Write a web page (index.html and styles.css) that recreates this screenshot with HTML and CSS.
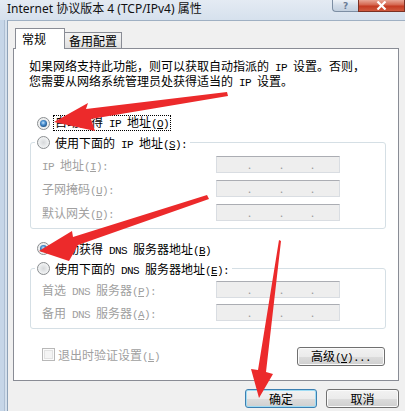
FILE: index.html
```html
<!DOCTYPE html>
<html lang="zh-CN">
<head>
<meta charset="utf-8">
<title>Internet 协议版本 4 (TCP/IPv4) 属性</title>
<link rel="stylesheet" href="styles.css">
</head>
<body>
<div class="window">
  <div class="titlebar">
    <span class="title">Internet 协议版本 4 (TCP/IPv4) 属性</span>
    <div class="caption-btns">
      <span class="cap-btn help">?</span>
      <span class="cap-btn close"><svg width="11" height="9" viewBox="0 0 11 9"><path d="M1.5 0.5 L9.5 8.5 M9.5 0.5 L1.5 8.5" stroke="#fff" stroke-width="2.2" fill="none"/></svg></span>
    </div>
  </div>
  <div class="client">
    <div class="tabs">
      <span class="tab active">常规</span>
      <span class="tab">备用配置</span>
    </div>
    <div class="panel">
      <div class="intro">
        <div class="line">如果网络支持此功能，则可以获取自动指派的<span class="lat"> IP </span>设置。否则，</div>
        <div class="line">您需要从网络系统管理员处获得适当的<span class="lat"> IP </span>设置。</div>
      </div>

      <div class="radio-row top"><span class="radio checked"></span><span class="focus">自动获得<span class="lat"> IP </span>地址<span class="lat">(<u>O</u>)</span></span></div>
      <fieldset class="group ip">
        <legend><span class="radio"></span><span>使用下面的<span class="lat"> IP </span>地址<span class="lat">(<u>S</u>):</span></span></legend>
        <div class="field"><span class="flabel"><span class="lat">IP </span>地址<span class="lat">(<u>I</u>):</span></span><span class="ipbox"><i>.</i><i>.</i><i>.</i><i></i></span></div>
        <div class="field"><span class="flabel">子网掩码<span class="lat">(<u>U</u>):</span></span><span class="ipbox"><i>.</i><i>.</i><i>.</i><i></i></span></div>
        <div class="field"><span class="flabel">默认网关<span class="lat">(<u>D</u>):</span></span><span class="ipbox"><i>.</i><i>.</i><i>.</i><i></i></span></div>
      </fieldset>

      <div class="radio-row dns"><span class="radio checked"></span><span class="plain">自动获得<span class="lat"> DNS </span>服务器地址<span class="lat">(<u>B</u>)</span></span></div>
      <fieldset class="group dnsgrp">
        <legend><span class="radio"></span><span>使用下面的<span class="lat"> DNS </span>服务器地址<span class="lat">(<u>E</u>):</span></span></legend>
        <div class="field"><span class="flabel">首选<span class="lat"> DNS </span>服务器<span class="lat">(<u>P</u>):</span></span><span class="ipbox"><i>.</i><i>.</i><i>.</i><i></i></span></div>
        <div class="field"><span class="flabel">备用<span class="lat"> DNS </span>服务器<span class="lat">(<u>A</u>):</span></span><span class="ipbox"><i>.</i><i>.</i><i>.</i><i></i></span></div>
      </fieldset>

      <div class="bottom-row">
        <div class="checkline"><span class="check"></span><span class="dis">退出时验证设置<span class="lat">(<u>L</u>)</span></span></div>
        <button class="btn adv">高级<span class="lat">(<u>V</u>)...</span></button>
      </div>
    </div>
    <div class="dialog-btns">
      <button class="btn ok">确定</button>
      <button class="btn cancel">取消</button>
    </div>
  </div>

  <svg class="arrows" width="405" height="411" viewBox="0 0 405 411">
    <polygon fill="#ec2a2b" points="54,122 88,103 86,109 227,92 228,96 91,119 95,131"/>
    <polygon fill="#ec2a2b" points="39,251 72,231 73,237 207,195 209,199 78,245 69,261"/>
    <polygon fill="#ec2a2b" points="259,398 251,369 258,370 279,240 281,241 266,372 273,374"/>
  </svg>
</div>
</body>
</html>
```

FILE: styles.css
```css
* { box-sizing: border-box; margin: 0; padding: 0; }

html, body {
  width: 405px;
  height: 411px;
  overflow: hidden;
}

body {
  font-family: "Noto Sans CJK SC", sans-serif;
  font-size: 12px;
  color: #000;
  background: #cddbea;
}

.window {
  position: relative;
  width: 405px;
  height: 411px;
  background: linear-gradient(to right, #c6d6e8 0, #c6d6e8 4px, #aebfd3 4px, #aebfd3 5px, #d4e0ed 5px);
}

/* Latin runs drawn in a fixed 6px-per-glyph face, like the dialog's 宋体 */
.lat {
  font-family: "Liberation Mono", monospace;
  font-size: 11px;
  letter-spacing: -0.6px;
  white-space: pre;
}

/* ---------- title bar ---------- */
.titlebar {
  height: 20px;
  display: flex;
  align-items: flex-start;
  padding-left: 7px;
  background: linear-gradient(to bottom, #e4ebf3, #d6e1ed);
}

.title {
  font-family: "Noto Sans", "Noto Sans CJK SC", sans-serif;
  font-size: 12px;
  line-height: 17px;
  color: #111;
}

.caption-btns {
  margin-left: auto;
  display: flex;
}

.cap-btn {
  height: 12px;
  display: flex;
  align-items: center;
  justify-content: center;
}

.cap-btn.help {
  width: 26px;
  border: 1px solid #7d8ea3;
  border-top: none;
  border-right: none;
  border-bottom-left-radius: 4px;
  background: linear-gradient(to bottom, #eef2f7, #d2dce8 50%, #c3d0df);
  color: #6a7d96;
  font-family: "DejaVu Sans", sans-serif;
  font-size: 9px;
  font-weight: bold;
  line-height: 10px;
}

.cap-btn.close {
  width: 47px;
  border: 1px solid #7b3124;
  border-top: none;
  background: linear-gradient(to bottom, #e8a696, #d4654e 45%, #c43a22 55%, #d05a3e);
}

/* ---------- client area ---------- */
.client {
  margin-left: 7px;
  height: 391px;
  background: #f0f0f0;
  border-left: 1px solid #8ea2b8;
  border-top: 1px solid #9fb0c3;
  padding-top: 7px;
}

.tabs {
  display: flex;
  align-items: flex-end;
  height: 21px;
  margin-left: 7px;
  margin-bottom: -1px;
  position: relative;
  z-index: 1;
}

.tab {
  display: block;
  border: 1px solid #898c95;
  border-bottom: none;
  line-height: 14px;
}

.tab.active {
  width: 50px;
  height: 21px;
  background: #fff;
  padding: 3px 0 0 6px;
}

.tab:not(.active) {
  width: 57px;
  height: 16px;
  margin-bottom: 1px;
  border-left: none;
  padding: 1px 0 0 4px;
  background: linear-gradient(to bottom, #f3f3f3, #ebebeb 50%, #dedede);
}

.panel {
  margin-left: 5px;
  width: 386px;
  height: 333px;
  border: 1px solid #898c95;
  background: #fff;
  padding: 9px 0 0 15px;
}

.intro .line {
  height: 15px;
  line-height: 15px;
  white-space: nowrap;
}

u { text-decoration: underline; text-underline-offset: 1px; }

/* ---------- radios ---------- */
.radio-row {
  display: flex;
  align-items: center;
  height: 18px;
  padding-left: 8px;
}

.radio-row.top { margin-top: 26px; }
.radio-row.dns { margin-top: 10px; gap: 5px; }

.radio {
  flex: none;
  position: relative;
  width: 13px;
  height: 13px;
  border-radius: 50%;
  border: 1px solid #8a8d90;
  background: radial-gradient(circle at 50% 50%, #d6d8da 0, #eceeef 55%, #fbfbfb 100%);
}

.radio.checked::after {
  content: "";
  position: absolute;
  left: 2px;
  top: 2px;
  width: 7px;
  height: 7px;
  border-radius: 50%;
  background: radial-gradient(circle at 45% 40%, #c7e4fb 0, #4e93d3 35%, #16497f 80%, #0e345f 100%);
}

.focus {
  margin-left: 3px;
  padding: 0 1px;
  line-height: 12px;
  border: 1px dotted #000;
}

/* ---------- group boxes ---------- */
.group {
  margin-left: 1px;
  width: 356px;
  border: 1px solid #d5dfe5;
  border-radius: 3px;
  padding: 0 0 4px 0;
  min-width: 0;
}

.group.ip { margin-top: 1px; }
.group.dnsgrp { margin-top: 2px; }

.group legend {
  display: flex;
  align-items: center;
  gap: 5px;
  height: 19px;
  margin-left: 4px;
  padding: 0 3px 0 2px;
}

.field {
  display: flex;
  align-items: center;
  height: 24px;
  padding-left: 11px;
  color: #a0a0a0;
}

.dnsgrp .field { height: 23px; }

.flabel {
  width: 174px;
  flex: none;
}

.ipbox {
  width: 124px;
  height: 17px;
  display: grid;
  grid-template-columns: 34px 32px 31px 1fr;
  background: #eeeeee;
  border: 1px solid #d9dde2;
  border-top-color: #abadb3;
  color: #9a9a9a;
}

.ipbox i {
  font-style: normal;
  text-align: right;
  font-size: 11px;
  line-height: 15px;
}

/* ---------- bottom row ---------- */
.bottom-row {
  display: flex;
  justify-content: space-between;
  align-items: flex-start;
  margin-top: 18px;
  margin-left: 13px;
  width: 343px;
}

.checkline {
  display: flex;
  align-items: center;
  gap: 3px;
  height: 14px;
  color: #a0a0a0;
}

.check {
  width: 13px;
  height: 13px;
  border: 1px solid #b8b8b8;
  background: #f4f4f4;
  box-shadow: inset 0 0 0 1px #fbfbfb, inset 0 0 0 2px #e2e2e2;
}

.btn {
  font-family: "Noto Sans CJK SC", sans-serif;
  font-size: 12px;
  color: #000;
  height: 19px;
  line-height: 15px;
  border: 1px solid #707070;
  border-radius: 3px;
  background: linear-gradient(to bottom, #f2f2f2 0, #ebebeb 50%, #dddddd 50%, #cfcfcf 100%);
  box-shadow: inset 0 0 0 1px #fbfbfb;
}

.btn.adv { width: 88px; }

.dialog-btns {
  display: flex;
  justify-content: flex-end;
  gap: 9px;
  margin-top: 8px;
  padding-right: 6px;
}

.btn.ok {
  width: 72px;
  border-color: #3c7fb1;
  box-shadow: inset 0 0 0 1px #9fdcf4;
}

.btn.cancel { width: 73px; }

/* ---------- annotations ---------- */
.arrows {
  position: absolute;
  left: 0;
  top: 0;
  pointer-events: none;
}
```
